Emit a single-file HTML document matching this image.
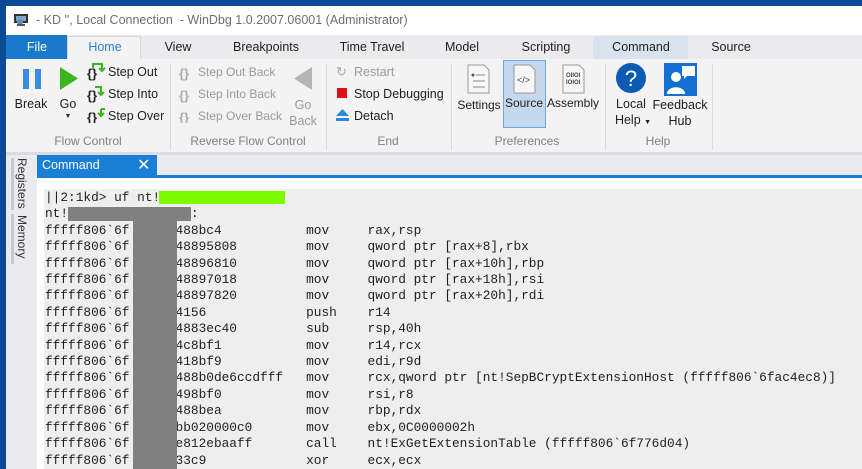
<!DOCTYPE html>
<html style="overflow:hidden"><head><meta charset="utf-8"><style>
*{margin:0;padding:0;box-sizing:border-box}
html,body{width:862px;height:469px;overflow:hidden}
body{background:#0a4a94;font-family:"Liberation Sans",sans-serif;position:relative}
.a{position:absolute;white-space:nowrap}
.t{font-size:12.5px;color:#1e1e1e}
.g{color:#9a9a9a}
.c{transform:translateX(-50%)}
.sep{position:absolute;top:64px;width:1px;height:86px;background:#d8d8d8}
.lbl{position:absolute;top:134px;font-size:12px;color:#808080;transform:translateX(-50%);white-space:nowrap}
pre{position:absolute;left:8px;top:12px;font-family:"Liberation Mono",monospace;font-size:12.8px;line-height:16.4px;color:#1e1e1e}
</style></head><body>
<div class="a" style="left:6px;top:6px;width:856px;height:29px;background:#fff"></div>
<svg class="a" style="left:13px;top:13px" width="16" height="14"><rect x="1" y="1" width="14" height="9" fill="#333"/><rect x="3" y="3" width="10" height="5" fill="#7fa7c9"/><circle cx="7" cy="9" r="3" fill="#5b8fc0"/><rect x="4" y="11" width="8" height="2" fill="#555"/></svg>
<div class="a" style="left:36px;top:13px;font-size:12.5px;color:#6e6e6e">- KD '', Local Connection &nbsp;- WinDbg 1.0.2007.06001 (Administrator)</div>
<div class="a" style="left:6px;top:35px;width:856px;height:24px;background:#ebebef"></div>
<div class="a" style="left:6px;top:35px;width:61px;height:24px;background:#1979ca"></div>
<div class="a" style="left:67px;top:36px;width:74px;height:23px;background:#f3f3f3;border:1px solid #d6d6d6;border-bottom:none"></div>
<div class="a" style="left:593px;top:36px;width:95px;height:23px;background:#d9e3ee"></div>
<div class="a t c" style="left:37px;top:40px;color:#fff">File</div>
<div class="a t c" style="left:105px;top:40px;color:#2b7fd0">Home</div>
<div class="a t c" style="left:178px;top:40px">View</div>
<div class="a t c" style="left:266px;top:40px">Breakpoints</div>
<div class="a t c" style="left:372px;top:40px">Time Travel</div>
<div class="a t c" style="left:462px;top:40px">Model</div>
<div class="a t c" style="left:546px;top:40px">Scripting</div>
<div class="a t c" style="left:641px;top:40px">Command</div>
<div class="a t c" style="left:731px;top:40px">Source</div>
<div class="a" style="left:6px;top:59px;width:856px;height:94px;background:#f3f3f3"></div>
<div class="a" style="left:6px;top:152px;width:856px;height:3px;background:#dcdcde"></div>
<div class="a" style="left:23px;top:69px;width:6px;height:20px;background:#3b8de0"></div>
<div class="a" style="left:35px;top:69px;width:6px;height:20px;background:#3b8de0"></div>
<div class="a t c" style="left:31px;top:97px">Break</div>
<svg class="a" style="left:60px;top:67px" width="18" height="23"><polygon points="0,0 18,11.5 0,23" fill="#3cb521"/></svg>
<div class="a t c" style="left:68px;top:97px">Go</div>
<div class="a c" style="left:68px;top:113px;font-size:7px;color:#333">▼</div>
<svg class="a" style="left:87px;top:63px" width="20" height="60" font-family="Liberation Sans" font-weight="bold" font-size="13">
<text x="0" y="15" fill="#222">{}</text><path d="M6 5V1h9v6M12 5l3 3 3-3" stroke="#3cb521" stroke-width="2" fill="none"/>
<text x="0" y="37" fill="#222">{}</text><path d="M8 24h6v7M11 29l3 3 3-3" stroke="#3cb521" stroke-width="2" fill="none"/>
<text x="0" y="59" fill="#222">{}</text><path d="M14 46v6M11 50l3 3 3-3M14 46h4" stroke="#3cb521" stroke-width="2" fill="none"/>
</svg>
<div class="a t" style="left:108px;top:65px">Step Out</div>
<div class="a t" style="left:108px;top:87px">Step Into</div>
<div class="a t" style="left:108px;top:109px">Step Over</div>
<div class="sep" style="left:170px"></div>
<svg class="a" style="left:177px;top:63px" width="20" height="60" font-family="Liberation Sans" font-weight="bold" font-size="13" fill="#aaa">
<text x="2" y="15">{}</text><text x="2" y="37">{}</text><text x="2" y="59">{}</text></svg>
<div class="a t g" style="left:198px;top:65px;font-size:12px">Step Out Back</div>
<div class="a t g" style="left:198px;top:87px;font-size:12px">Step Into Back</div>
<div class="a t g" style="left:198px;top:109px;font-size:12px">Step Over Back</div>
<svg class="a" style="left:294px;top:67px" width="18" height="23"><polygon points="18,0 0,11.5 18,23" fill="#b4b4b4"/></svg>
<div class="a t g c" style="left:303px;top:98px">Go</div>
<div class="a t g c" style="left:303px;top:114px">Back</div>
<div class="sep" style="left:326px"></div>
<div class="a" style="left:336px;top:64px;font-size:13px;color:#aaa">↻</div>
<div class="a t g" style="left:354px;top:65px">Restart</div>
<div class="a" style="left:337px;top:88px;width:10px;height:10px;background:#e0101a"></div>
<div class="a t" style="left:354px;top:87px">Stop Debugging</div>
<svg class="a" style="left:336px;top:109px" width="13" height="13"><polygon points="6.5,0 13,7 0,7" fill="#2a8ae0"/><rect y="9" width="13" height="3" fill="#2a8ae0"/></svg>
<div class="a t" style="left:354px;top:109px">Detach</div>
<div class="sep" style="left:451px"></div>
<div class="a" style="left:503px;top:60px;width:43px;height:68px;background:#c5d9ee;border:1px solid #6fa8dc"></div>
<svg class="a" style="left:467px;top:64px" width="120" height="30">
<path d="M1 1h16l5 5v23H1z" fill="#f7f7f7" stroke="#999"/><circle cx="6" cy="11" r="1.5" fill="#555"/><path d="M9 11h9M6 17h12M6 23h12" stroke="#888"/>
<path d="M47 1h16l5 5v23H47z" fill="#f7f7f7" stroke="#999"/><text x="50" y="19" font-size="9" fill="#444" font-family="Liberation Sans">&lt;/&gt;</text>
<path d="M96 1h16l5 5v23H96z" fill="#f7f7f7" stroke="#999"/><text x="99" y="13" font-size="6" fill="#444" font-family="Liberation Sans" font-weight="bold">OIIOI</text><text x="99" y="20" font-size="6" fill="#444" font-family="Liberation Sans" font-weight="bold">IOIOI</text>
</svg>
<div class="a t c" style="left:479px;top:98px;font-size:12px">Settings</div>
<div class="a t c" style="left:524px;top:96px;font-size:12px">Source</div>
<div class="a t c" style="left:573px;top:96px;font-size:12px">Assembly</div>
<div class="sep" style="left:605px"></div>
<svg class="a" style="left:615px;top:62px" width="32" height="32"><circle cx="16" cy="16" r="15" fill="#0b5bb5"/><text x="16" y="24" text-anchor="middle" font-size="22" fill="#fff" font-family="Liberation Sans">?</text></svg>
<div class="a t c" style="left:631px;top:97px">Local</div>
<div class="a t c" style="left:633px;top:113px">Help <span style="font-size:7px">▼</span></div>
<svg class="a" style="left:664px;top:63px" width="33" height="33"><rect width="33" height="33" fill="#1170d0"/><circle cx="12" cy="14" r="5" fill="#fff"/><path d="M3 31c0-9 18-9 18 0z" fill="#fff"/><path d="M18 3h13v10h-8l-3 3v-3h-2z" fill="#fff"/></svg>
<div class="a t c" style="left:680px;top:98px">Feedback</div>
<div class="a t c" style="left:680px;top:114px">Hub</div>
<div class="sep" style="left:712px"></div>
<div class="lbl" style="left:88px">Flow Control</div>
<div class="lbl" style="left:248px">Reverse Flow Control</div>
<div class="lbl" style="left:388px">End</div>
<div class="lbl" style="left:527px">Preferences</div>
<div class="lbl" style="left:658px">Help</div>
<div class="a" style="left:6px;top:155px;width:856px;height:314px;background:#ebebef"></div>
<div class="a" style="left:11px;top:158px;width:3px;height:52px;background:#c9c9cd"></div>
<div class="a" style="left:11px;top:214px;width:3px;height:50px;background:#c9c9cd"></div>
<div class="a" style="left:29px;top:158px;font-size:12px;color:#333;transform:rotate(90deg);transform-origin:0 0">Registers</div>
<div class="a" style="left:29px;top:215px;font-size:12px;color:#333;transform:rotate(90deg);transform-origin:0 0">Memory</div>
<div class="a" style="left:37px;top:155px;width:120px;height:21px;background:#1c7fd6"></div>
<div class="a" style="left:42px;top:158px;font-size:12.5px;color:#fff">Command</div>
<div class="a" style="left:137px;top:155px;font-size:16px;color:#fff">✕</div>
<div class="a" style="left:37px;top:175px;width:825px;height:3px;background:#1c7fd6"></div>
<div class="a" style="left:37px;top:178px;width:825px;height:291px;background:#fff"></div>
<div class="a" style="left:37px;top:178px;width:825px;height:291px;overflow:hidden">
<div class="a" style="left:7px;top:11px;width:818px;height:280px;background:#eeeeee"></div>
<pre>||2:1kd&gt; uf nt!
nt!                :
fffff806`6f      488bc4           mov     rax,rsp
fffff806`6f      48895808         mov     qword ptr [rax+8],rbx
fffff806`6f      48896810         mov     qword ptr [rax+10h],rbp
fffff806`6f      48897018         mov     qword ptr [rax+18h],rsi
fffff806`6f      48897820         mov     qword ptr [rax+20h],rdi
fffff806`6f      4156             push    r14
fffff806`6f      4883ec40         sub     rsp,40h
fffff806`6f      4c8bf1           mov     r14,rcx
fffff806`6f      418bf9           mov     edi,r9d
fffff806`6f      488b0de6ccdfff   mov     rcx,qword ptr [nt!SepBCryptExtensionHost (fffff806`6fac4ec8)]
fffff806`6f      498bf0           mov     rsi,r8
fffff806`6f      488bea           mov     rbp,rdx
fffff806`6f      bb020000c0       mov     ebx,0C0000002h
fffff806`6f      e812ebaaff       call    nt!ExGetExtensionTable (fffff806`6f776d04)
fffff806`6f      33c9             xor     ecx,ecx</pre>
<div class="a" style="left:122px;top:13px;width:126px;height:13px;background:#7dfc00"></div>
<div class="a" style="left:31px;top:29px;width:123px;height:14px;background:#808080"></div>
<div class="a" style="left:96px;top:43px;width:44px;height:250px;background:#808080"></div>
</div>
</body></html>
